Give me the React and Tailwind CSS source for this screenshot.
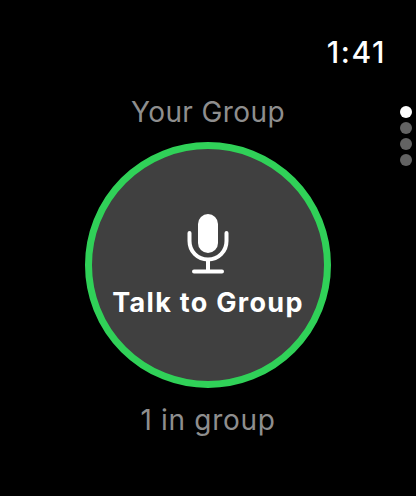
function MicIcon() {
  return (
    <svg width="42" height="60" viewBox="0 0 42 60" fill="none" className="block">
      <rect x="11" y="0" width="20" height="39" rx="10" fill="white" />
      <path d="M2.500 19V27C2.500 37.500 10.500 45.500 21 45.500C31.500 45.500 39.500 37.500 39.500 27V19" stroke="white" strokeWidth="4" strokeLinecap="round" />
      <path d="M21 45.500V56" stroke="white" strokeWidth="4" />
      <path d="M7 57.500H35" stroke="white" strokeWidth="4" strokeLinecap="round" />
    </svg>
  );
}

export default function App() {
  return (
    <div className="relative w-[416px] h-[496px] bg-black overflow-hidden font-['Inter','Noto_Sans',sans-serif]">
      <div className="flex justify-end pt-[33px] pr-[30px]">
        <span className="text-[30px] leading-[38px] font-medium tracking-[1.6px] text-white">1:41</span>
      </div>
      <div className="flex flex-col items-center mt-[24px]">
        <h2 className="text-[28px] leading-[34px] tracking-[0.4px] text-[#8e8e8e]">Your Group</h2>
        <button className="mt-[13px] w-[246px] h-[246px] rounded-full border-[7px] border-[#30d158] bg-[#404040] flex flex-col items-center pt-[65px]">
          <MicIcon />
          <span className="mt-[13px] text-[27px] leading-[32px] font-bold text-white tracking-[1.300px]">Talk to Group</span>
        </button>
        <p className="mt-[15px] text-[28px] leading-[34px] tracking-[0.700px] text-[#8e8e8e]">1 in group</p>
      </div>
      <div className="absolute top-[106px] right-[4px] flex flex-col gap-1">
        <div className="w-3 h-3 rounded-full bg-white" />
        <div className="w-3 h-3 rounded-full bg-[#636363]" />
        <div className="w-3 h-3 rounded-full bg-[#636363]" />
        <div className="w-3 h-3 rounded-full bg-[#636363]" />
      </div>
    </div>
  );
}
